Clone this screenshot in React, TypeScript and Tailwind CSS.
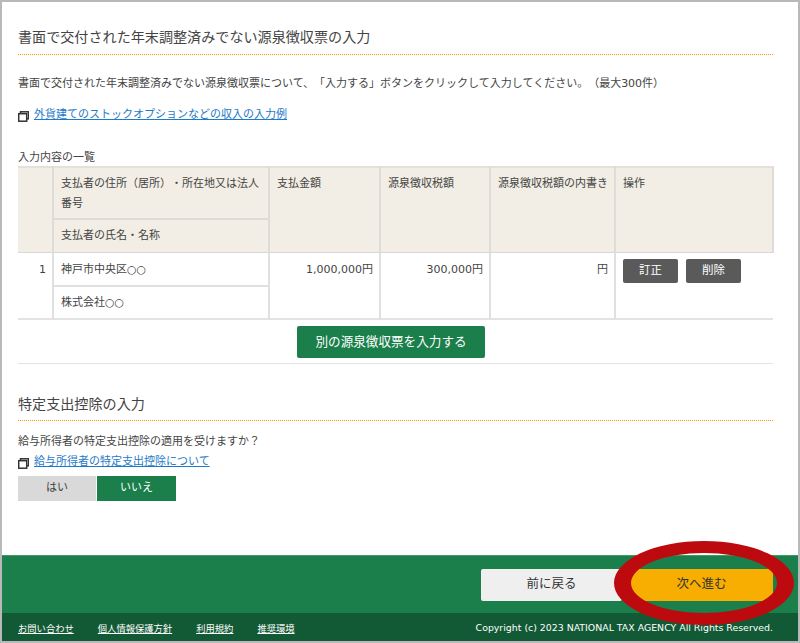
const font = { fontFamily: '"DejaVu Sans","Noto Sans CJK JP",sans-serif' };

function DocIcon() {
  return (
    <svg width="11" height="11" viewBox="0 0 11 11" className="mt-[2px] shrink-0">
      <rect x="2.5" y="0.8" width="8" height="7" fill="#fff" stroke="#333" strokeWidth="1.5" />
      <rect x="0.7" y="2.7" width="8" height="7.5" fill="#fff" stroke="#333" strokeWidth="1.5" />
    </svg>
  );
}

const th = "border-r-2 border-[#dedcd6] bg-[#f2eee5] pl-[7px] pr-[5px] font-normal text-left leading-[20px]";
const td = "border-r-2 border-[#e0e0e0] pl-[7px] pr-[6px] align-top leading-[20px]";

export default function App() {
  return (
    <div className="relative flex h-[643px] w-[800px] flex-col overflow-hidden border-2 border-[#b9b9b9] bg-white text-[11px] text-[#444] [text-spacing-trim:space-all]" style={font}>
      <div className="flex-1 pl-[16px] pr-[25px] pt-[25px]">
        <h2 className="border-b border-dotted border-[#f39800] pb-[7px] text-[14.1px] font-normal leading-[20px] text-[#444]">
          書面で交付された年末調整済みでない源泉徴収票の入力
        </h2>
        <p className="mt-[20px] leading-[18px]">
          書面で交付された年末調整済みでない源泉徴収票について、「入力する」ボタンをクリックして入力してください。（最大300件）
        </p>
        <div className="mt-[12px] flex items-center gap-[5px] leading-[20px]">
          <DocIcon />
          <a className="text-[#1e79c8] underline">外貨建てのストックオプションなどの収入の入力例</a>
        </div>
        <div className="mt-[24px] leading-[17px]">入力内容の一覧</div>
        <table className="w-[755px] table-fixed border-collapse">
          <colgroup>
            <col className="w-[35px]" />
            <col className="w-[216px]" />
            <col className="w-[111px]" />
            <col className="w-[110px]" />
            <col className="w-[125px]" />
            <col className="w-[158px]" />
          </colgroup>
          <tbody>
            <tr className="h-[52px] border-t-2 border-[#e3e1da]">
              <th rowSpan={2} className={th}></th>
              <th className={th + " border-b-2 pt-[6px] align-top"}>支払者の住所（居所）・所在地又は法人番号</th>
              <th rowSpan={2} className={th + " pt-[6px] align-top"}>支払金額</th>
              <th rowSpan={2} className={th + " pt-[6px] align-top"}>源泉徴収税額</th>
              <th rowSpan={2} className={th + " pt-[6px] align-top"}>源泉徴収税額の内書き</th>
              <th rowSpan={2} className={th + " border-r-0 pt-[6px] align-top"}>操作</th>
            </tr>
            <tr className="h-[33px] border-b border-[#d8d8d8]">
              <th className={th + " align-middle"}>支払者の氏名・名称</th>
            </tr>
            <tr className="h-[34px]">
              <td rowSpan={2} className={td + " pt-[7px] text-right"}>1</td>
              <td className={td + " border-b-2 pt-[7px]"}>神戸市中央区○○</td>
              <td rowSpan={2} className={td + " pt-[7px] text-right"}>1,000,000円</td>
              <td rowSpan={2} className={td + " pt-[7px] text-right"}>300,000円</td>
              <td rowSpan={2} className={td + " pt-[7px] text-right"}>円</td>
              <td rowSpan={2} className="px-[7px] pt-[6px] align-top">
                <div className="flex gap-[8px]">
                  <button className="h-[24px] w-[55px] rounded-[2px] bg-[#5a5a5a] text-[11.5px] text-white">訂正</button>
                  <button className="h-[24px] w-[55px] rounded-[2px] bg-[#5a5a5a] text-[11.5px] text-white">削除</button>
                </div>
              </td>
            </tr>
            <tr className="h-[33px] border-b-2 border-[#e3e3e3]">
              <td className={td + " pt-[6px]"}>株式会社○○</td>
            </tr>
          </tbody>
        </table>
        <div className="flex justify-center border-b border-[#e3e3e3] pb-[5px] pr-[9px] pt-[6px]">
          <button className="h-[32px] w-[188px] rounded-[2px] bg-[#1a7f4b] text-[12.6px] text-white">別の源泉徴収票を入力する</button>
        </div>
        <h2 className="mt-[30px] border-b border-dotted border-[#f39800] pb-[6px] text-[14.1px] font-normal leading-[20px] text-[#444]">
          特定支出控除の入力
        </h2>
        <p className="mt-[12px] leading-[18px]">給与所得者の特定支出控除の適用を受けますか？</p>
        <div className="mt-[1px] flex items-center gap-[5px] leading-[20px]">
          <DocIcon />
          <a className="text-[#1e79c8] underline">給与所得者の特定支出控除について</a>
        </div>
        <div className="mt-[4px] flex gap-px">
          <div className="flex h-[25px] w-[78px] items-center justify-center bg-[#d9d9d9]">はい</div>
          <div className="flex h-[25px] w-[79px] items-center justify-center bg-[#1a7f4b] text-white">いいえ</div>
        </div>
      </div>

      <div className="flex h-[58px] items-center justify-end gap-[8px] border-t border-[#3f9a68] bg-[#1b7f4b] pr-[25px]">
        <button className="h-[32px] w-[141px] rounded-[2px] bg-[#efefef] text-[12.5px] text-[#333]">前に戻る</button>
        <button className="h-[32px] w-[143px] rounded-[2px] bg-[#f7ae00] text-[12.5px] text-[#333]">次へ進む</button>
      </div>
      <div className="flex h-[28px] items-center justify-between bg-[#125a35] pl-[16px] pr-[25px] pt-[3px] text-[9.3px] text-white">
        <div className="flex gap-[24px]">
          <a className="underline">お問い合わせ</a>
          <a className="underline">個人情報保護方針</a>
          <a className="underline">利用規約</a>
          <a className="underline">推奨環境</a>
        </div>
        <span className="text-[9.4px]">Copyright (c) 2023 NATIONAL TAX AGENCY All Rights Reserved.</span>
      </div>

      <svg className="absolute left-[608px] top-[535px]" width="190" height="96" viewBox="0 0 190 96">
        <path
          fillRule="evenodd"
          fill="#bd0a0e"
          d="M4 46a90 42 0 1 0 180 0a90 42 0 1 0 -180 0ZM21 46a73 30 0 1 0 146 0a73 30 0 1 0 -146 0Z"
        />
      </svg>
    </div>
  );
}
